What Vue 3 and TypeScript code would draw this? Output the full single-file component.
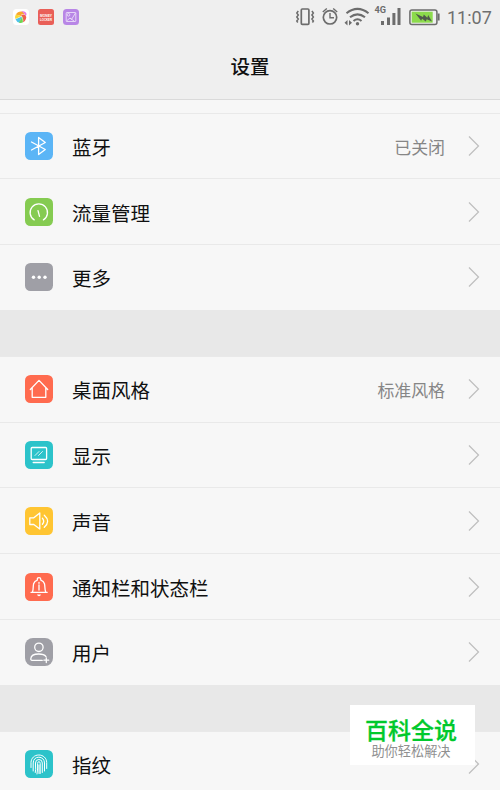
<script setup lang="ts">
interface Item {
  icon: string
  color: string
  label: string
  value?: string
}

const sections: Item[][] = [
  [
    { icon: 'bluetooth', color: '#5bb5f6', label: '蓝牙', value: '已关闭' },
    { icon: 'traffic', color: '#85cb51', label: '流量管理' },
    { icon: 'more', color: '#9f9fa6', label: '更多' },
  ],
  [
    { icon: 'home', color: '#ff6b4f', label: '桌面风格', value: '标准风格' },
    { icon: 'display', color: '#2cc3ca', label: '显示' },
    { icon: 'sound', color: '#ffc532', label: '声音' },
    { icon: 'bell', color: '#ff6b4f', label: '通知栏和状态栏' },
    { icon: 'user', color: '#9f9fa6', label: '用户' },
  ],
  [{ icon: 'finger', color: '#2cc3ca', label: '指纹' }],
]
</script>

<template>
  <div class="screen">
    <header class="head">
      <div class="status">
        <div class="apps">
          <svg class="app" viewBox="0 0 16 16">
            <rect width="16" height="16" rx="3.5" fill="#fff" />
            <path d="M2.800 5.600Q5 1.800 9.500 2.600L12 5.500Q8 4 8 7z" fill="#f9a72b" />
            <path d="M8.500 2.300Q12.500 1.500 13.600 5L12.800 7.500Q11.500 4.200 8.500 2.300z" fill="#e77be0" />
            <path d="M8 6Q12 4.500 13.300 8Q13 12 10 13.300Q11 9.500 8 6z" fill="#f0604b" />
            <path d="M2.800 5.600Q1.500 8 2.500 10L8.500 7z" fill="#f8d738" />
            <path d="M2.500 10.200Q4 13.500 6.500 13.800L9 7.500z" fill="#4fc4e8" />
            <path d="M6 13.800Q8.500 14.300 10 13.300L9.200 7.500z" fill="#6fd552" />
          </svg>
          <svg class="app" viewBox="0 0 16 16">
            <rect width="16" height="16" rx="2.500" fill="#e95f58" />
            <text x="8" y="7.600" class="tiny" textLength="12" lengthAdjust="spacingAndGlyphs">MONEY</text>
            <text x="8" y="11.600" class="tiny" textLength="12" lengthAdjust="spacingAndGlyphs">LOCKER</text>
          </svg>
          <svg class="app" viewBox="0 0 16 16">
            <rect width="16" height="16" rx="3.500" fill="#b886e6" />
            <g fill="none" stroke="#eadcf8" stroke-width=".9">
              <rect x="3.200" y="3.500" width="9.600" height="9" rx=".5" />
              <circle cx="5.500" cy="5.800" r="1.300" />
              <path d="M3.500 12L7 9L8.500 10.500L12.500 4M7 9L11 12" />
            </g>
          </svg>
        </div>
        <svg class="indicators" viewBox="0 0 150 34">
          <g fill="none" stroke="#6c6c6c" stroke-width="1.700">
            <g transform="translate(9.400 0)">
              <rect x="6.900" y="9" width="7.600" height="15.300" rx="1" />
              <path d="M3.900 11l-1.500 2 1.500 2-1.500 2 1.500 2-1.500 2 1 1.500M17.500 11l1.500 2-1.500 2 1.500 2-1.500 2 1.500 2-1 1.500" stroke-width="1.500" />
              <circle cx="35.600" cy="17.300" r="6.700" />
              <path d="M35.600 13v4.700h4M28.400 12l4-3.500M42.800 12l-4-3.500" stroke-width="1.400" />
            </g>
            <path d="M61.500 13.200Q72.500 4.500 83.500 13.200M65 17.300Q72.500 11.300 80 17.300M68.500 21Q72.500 17.500 76.500 21" stroke-width="2.100" />
          </g>
          <g fill="#6c6c6c">
            <circle cx="72.500" cy="23.800" r="1.700" />
            <path d="M62.500 20v5.500L59.500 22.700zM64 20v5.500l3-2.800z" />
            <rect x="96" y="21" width="3" height="4" />
            <rect x="102" y="17.500" width="3" height="7.500" />
            <rect x="107.400" y="13" width="3" height="12" />
            <rect x="112.500" y="8" width="3" height="17" />
            <text x="89.500" y="12.500" class="net" textLength="11.500" lengthAdjust="spacingAndGlyphs">4G</text>
          </g>
          <rect x="124.900" y="9.900" width="27" height="14.500" rx="2" fill="none" stroke="#6c6c6c" stroke-width="1.500" />
          <path d="M152.600 13.500h2v7h-2z" fill="#6c6c6c" />
          <rect x="126.700" y="11.700" width="21" height="11" fill="#8cdb4c" />
          <path d="M130.500 13.500l7.500 3.600.8-2.600 3.500 3.200.9-2.700 3.800 6.600-5.300-2.400-.9 2.200-3.700-2.600-1 2z" fill="#505b4c" />
        </svg>
        <span class="time">11:07</span>
      </div>
      <h1 class="title">设置</h1>
    </header>

    <main class="list">
      <section v-for="(items, s) in sections" :key="s" class="section">
        <div v-for="item in items" :key="item.label" class="row">
          <svg class="icon" viewBox="0 0 28 28">
            <rect width="28" height="28" :rx="item.icon === 'user' ? 8 : 5.5" :fill="item.color" />
            <g v-if="item.icon === 'bluetooth'" class="line">
              <path d="M6.500 10L20.300 17.500L13.600 22.500V5.500L20.300 10.500L6.500 18" />
            </g>
            <g v-else-if="item.icon === 'traffic'" class="line">
              <path d="M9.200 21.900A8.700 8.700 0 1 1 18.400 21.900M13 12.600L14.500 18.300" />
            </g>
            <g v-else-if="item.icon === 'more'" fill="#fff">
              <circle cx="8.500" cy="14.300" r="1.700" />
              <circle cx="14.200" cy="14.300" r="1.700" />
              <circle cx="20" cy="14.300" r="1.700" />
            </g>
            <g v-else-if="item.icon === 'home'" class="line">
              <path d="M5.300 14.500L14 5.400L22.700 14.500M7.200 13V22.300H20.800V13" />
            </g>
            <g v-else-if="item.icon === 'display'" class="line">
              <rect x="6.200" y="6.500" width="15.400" height="12" rx="1" />
              <path d="M8.200 21.500H19.200" />
              <path d="M10 14.500l4-4M13.500 14.500l4-4" stroke-width=".8" />
            </g>
            <g v-else-if="item.icon === 'sound'" class="line">
              <path d="M4.800 10.800H8.800L14.800 6V22L8.800 17.500H4.800zM17.400 11.200Q20 14.200 17.400 17.200M19.300 8.200Q26 14.200 19.300 20.200" />
            </g>
            <g v-else-if="item.icon === 'bell'" class="line">
              <path d="M6 19.300H22.200M7.500 19C8.500 16.500 8 13 8.600 10.800C9.300 8.500 10.800 7.500 12.300 7.100V6.200Q12.300 4.600 14 4.600T15.800 6.200V7.100C17.300 7.500 18.800 8.500 19.500 10.800C20.100 13 19.600 16.500 20.700 19" />
              <path d="M14 12V17M14 9.500V10.300" />
              <path d="M12 21.500H16Q15.500 23.300 14 23.300T12 21.500z" fill="#fff" stroke="none" />
            </g>
            <g v-else-if="item.icon === 'user'" class="line">
              <circle cx="13.900" cy="9.300" r="4.200" />
              <path d="M17.300 22.300H7Q5.700 22.300 5.800 20.700C6 17.500 9 16 13.800 16C17.500 16 19.800 17 21 18.600M21.300 19.800V24.600M18.900 22.200H23.700" />
            </g>
            <g v-else class="line print">
              <path d="M6 17.500V12.500C6.200 8 9.500 5 13.800 5S21.600 8 21.700 12.500V18.500" />
              <path d="M8.200 21V13C8.200 9.500 10.500 7.200 13.800 7.200S19.500 9.500 19.500 13V21" />
              <path d="M10.300 22.500Q11 19 10.500 16V13Q10.500 9.500 13.900 9.500T17.300 13V22.500" />
              <path d="M12 24Q12.900 19 12.600 13.500Q12.600 11.700 13.900 11.700T15.200 13.500V23.500M14 15V23.500" />
            </g>
          </svg>
          <span class="label">{{ item.label }}</span>
          <span class="value">{{ item.value }}</span>
          <svg class="arrow" viewBox="0 0 12 22"><path d="M1 1.500L10.500 11L1 20.500" /></svg>
        </div>
      </section>
    </main>

    <aside class="badge">
      <strong>百科全说</strong>
      <span>助你轻松解决</span>
    </aside>
  </div>
</template>

<style>
body {
  margin: 0;
  overflow: hidden;
}
</style>

<style scoped>
.screen {
  position: relative;
  width: 500px;
  height: 790px;
  overflow: hidden;
  background: #e8e8e8;
  color: #101010;
  font-family: "Noto Sans CJK SC", sans-serif;
}
.head {
  box-sizing: border-box;
  height: 100px;
  background: #efefef;
  border-bottom: 1px solid #dadada;
}
.status {
  display: flex;
  height: 34px;
  align-items: center;
}
.apps {
  display: flex;
  gap: 9px;
  padding-left: 13px;
}
.app {
  width: 16px;
  height: 16px;
  overflow: visible;
}
.tiny {
  font: 700 4px "Liberation Sans", sans-serif;
  fill: #fff;
  text-anchor: middle;
}
.indicators {
  width: 150px;
  height: 34px;
  margin-left: auto;
  overflow: visible;
}
.net {
  font: 700 9.5px Roboto, sans-serif;
}
.time {
  width: 53px;
  margin: 1px 0 0 12px;
  font: 400 18px/34px Roboto, sans-serif;
  color: #6f6f6f;
}
.title {
  margin: 0;
  font-size: 19.5px;
  font-weight: 500;
  line-height: 64px;
  text-align: center;
}
.list {
  display: flex;
  flex-direction: column;
  gap: 46.15px;
}
.section {
  background: #f7f7f7;
}
.section:first-child {
  padding-top: 12.5px;
}
.row {
  box-sizing: border-box;
  display: flex;
  align-items: center;
  height: 65.75px;
  padding: 0 20px 0 25px;
  border-top: 1px solid #e9e9e9;
}
.icon {
  width: 28px;
  height: 28px;
  flex: none;
}
.line {
  fill: none;
  stroke: #fff;
  stroke-width: 1.3;
  stroke-linecap: round;
  stroke-linejoin: round;
}
.print {
  stroke-width: 1;
}
.label {
  margin: 2px 0 0 19px;
  font-size: 19.5px;
  line-height: 30px;
}
.value {
  margin: 2px 0 0 auto;
  font-size: 16.9px;
  line-height: 30px;
  color: #868686;
}
.arrow {
  width: 12px;
  height: 22px;
  margin-left: 23px;
  fill: none;
  stroke: #bebebe;
  stroke-width: 1.2;
}
.badge {
  position: absolute;
  left: 350px;
  top: 705px;
  box-sizing: border-box;
  width: 125px;
  height: 60px;
  padding-right: 3px;
  display: flex;
  flex-direction: column;
  align-items: center;
  background: #fff;
}
.badge strong {
  margin-top: 10px;
  font-size: 23px;
  font-weight: 500;
  line-height: 28px;
  color: #00c92c;
  -webkit-text-stroke: 0.3px #00c92c;
}
.badge span {
  margin-top: -1px;
  font-size: 13.2px;
  line-height: 17px;
  color: #909090;
}
</style>
